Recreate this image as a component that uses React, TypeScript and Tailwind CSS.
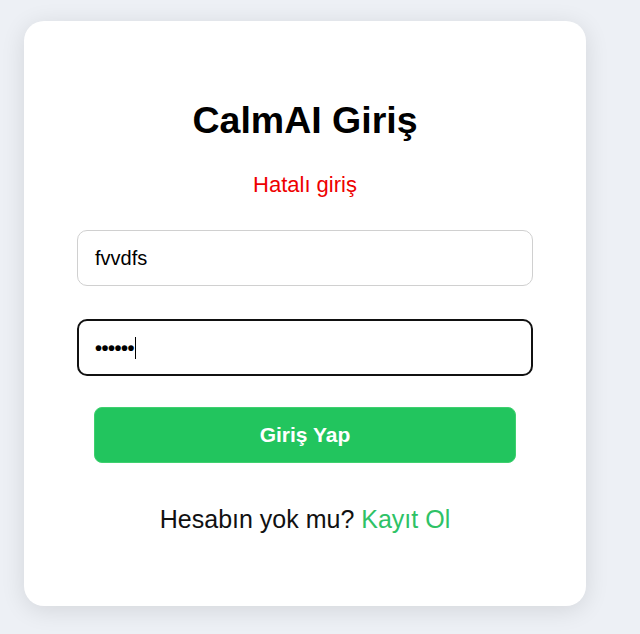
import React from "react";

export default function App() {
  return (
    <div
      className="min-h-[634px] w-full bg-[#edf0f5] pt-[21px] pl-[24px]"
      style={{ fontFamily: '"Liberation Sans", Arial, sans-serif' }}
    >
      <div className="flex h-[585px] w-[562px] flex-col items-center rounded-[20px] bg-white pt-[77px] shadow-[0_4px_24px_rgba(0,0,0,0.11)]">
        <h1 className="text-[37.5px] font-bold leading-[44px] text-black">CalmAI Giriş</h1>
        <p className="mt-[30px] text-[22px] leading-[26px] text-[#ee0000]">Hatalı giriş</p>
        <div className="mt-[32px] flex h-[56px] w-[456px] items-center rounded-[10px] border border-[#d0d0d0] px-[17px] text-[20px] text-black">
          fvvdfs
        </div>
        <div className="mt-[33px] flex h-[57px] w-[456px] items-center rounded-[10px] border-[2.5px] border-[#111] pl-[16px] text-[20px] text-black">
          <span className="font-bold tracking-[-0.5px]">••••••</span>
          <span className="ml-[1px] h-[22px] w-[1px] bg-black" />
        </div>
        <div className="mt-[31px] flex h-[56px] w-[422px] items-center justify-center rounded-[8px] border border-[#3fd06f] bg-[#22c55e] text-[21px] font-bold text-white">
          Giriş Yap
        </div>
        <p className="mt-[41px] text-[25px] leading-[30px] text-[#111]">
          Hesabın yok mu? <span className="text-[#2ec266]">Kayıt Ol</span>
        </p>
      </div>
    </div>
  );
}
